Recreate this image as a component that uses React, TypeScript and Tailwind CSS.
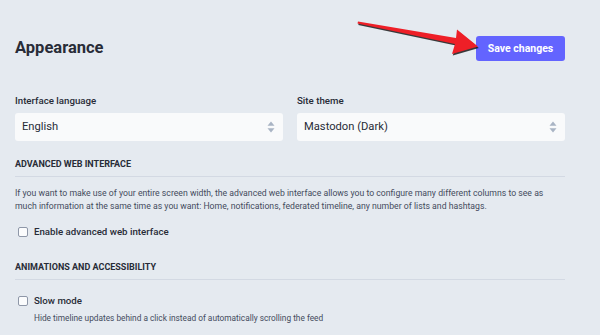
import React from "react";

const SelectArrows = () => (
  <svg width="8" height="12" viewBox="0 0 8 12" className="shrink-0">
    <path d="M4 0.5 L7.5 4.8 H0.5 Z" fill="#a9b4c4" />
    <path d="M4 11.5 L7.5 7.2 H0.5 Z" fill="#a9b4c4" />
  </svg>
);

const Select = ({ value }: { value: string }) => (
  <div className="h-[28px] bg-[#f9fafb] rounded-[3px] flex items-center justify-between pl-[7px] pr-[8px]">
    <span className="text-[11.2px] text-[#282c37]">{value}</span>
    <SelectArrows />
  </div>
);

const Checkbox = () => (
  <span className="w-[10px] h-[10px] shrink-0 rounded-[2px] border border-[#8e97a8] bg-[#fbfcfd]" />
);

const SectionTitle = ({ children }: { children: React.ReactNode }) => (
  <h3 className="text-[9px] leading-[12px] font-bold uppercase text-[#282c37] pb-[6px] border-b border-[#d3d9e3]">
    {children}
  </h3>
);

const RedArrow = () => (
  <svg
    className="absolute left-0 top-0 pointer-events-none"
    width="600"
    height="80"
    viewBox="0 0 600 80"
  >
    <path
      d="M358 21.5 L456 38 L457 29.5 L478 46.5 L452 54 L455 44 L357.5 23.5 Z"
      fill="#1b1b1b"
      transform="translate(0.8 1.4)"
      opacity="0.85"
    />
    <path
      d="M358 21.5 L456 38 L457 29.5 L478 46.5 L452 54 L455 44 L357.5 23.5 Z"
      fill="#ee1f27"
    />
  </svg>
);

export default function App() {
  return (
    <div
      className="relative w-[600px] h-[335px] overflow-hidden bg-[#e5eaf0]"
      style={{ fontFamily: "Roboto, 'Noto Sans', sans-serif" }}
    >
      <div className="w-[550px] ml-[15px] pt-[36px]">
        <div className="h-[25px] flex items-center justify-between">
          <h1 className="text-[16.5px] font-bold text-[#282c37] leading-none">
            Appearance
          </h1>
          <button className="h-[25px] w-[89px] rounded-[3px] bg-[#6364ff] text-white text-[10.5px] font-bold flex items-center justify-center">
            Save changes
          </button>
        </div>

        <div className="grid grid-cols-2 gap-[14px] mt-[34px]">
          <div>
            <label className="block text-[9.7px] leading-[12px] font-medium text-[#282c37] mb-[6px]">
              Interface language
            </label>
            <Select value="English" />
          </div>
          <div>
            <label className="block text-[9.7px] leading-[12px] font-medium text-[#282c37] mb-[6px]">
              Site theme
            </label>
            <Select value="Mastodon (Dark)" />
          </div>
        </div>

        <div className="mt-[17px]">
          <SectionTitle>Advanced web interface</SectionTitle>
          <p className="mt-[10px] text-[8.7px] leading-[13px] text-[#444b5d]">
            If you want to make use of your entire screen width, the advanced web
            interface allows you to configure many different columns to see as
            much information at the same time as you want: Home, notifications,
            federated timeline, any number of lists and hashtags.
          </p>
          <div className="mt-[12px] h-[14px] flex items-center gap-[6px] pl-[3px]">
            <Checkbox />
            <span className="text-[9.7px] font-medium text-[#282c37]">
              Enable advanced web interface
            </span>
          </div>
        </div>

        <div className="mt-[22px]">
          <SectionTitle>Animations and accessibility</SectionTitle>
          <div className="mt-[14px] h-[14px] flex items-center gap-[6px] pl-[3px]">
            <Checkbox />
            <span className="text-[9.7px] font-medium text-[#282c37]">
              Slow mode
            </span>
          </div>
          <p className="mt-[4px] pl-[19px] text-[8.3px] leading-[13px] text-[#444b5d]">
            Hide timeline updates behind a click instead of automatically
            scrolling the feed
          </p>
        </div>
      </div>
      <RedArrow />
    </div>
  );
}
